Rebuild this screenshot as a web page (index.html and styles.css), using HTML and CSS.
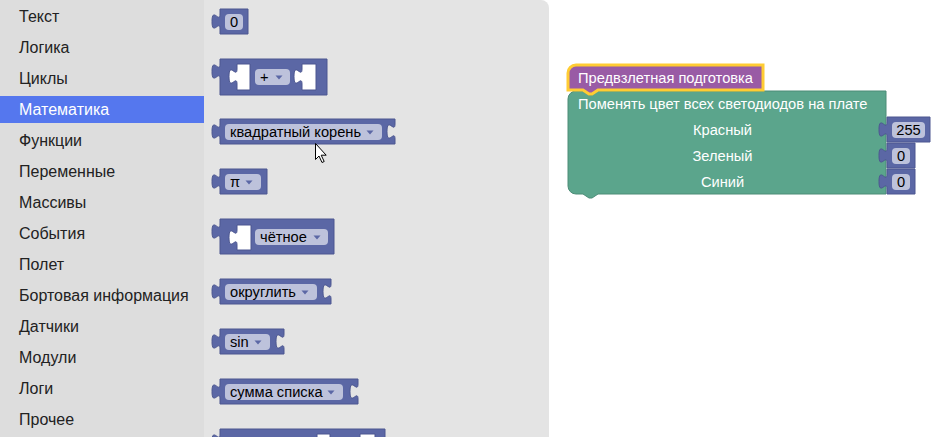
FILE: index.html
```html
<!DOCTYPE html>
<html lang="ru">
<head>
<meta charset="utf-8">
<title>Blockly</title>
<link rel="stylesheet" href="styles.css">
</head>
<body>
<nav class="toolbox">
  <div class="row">Текст</div>
  <div class="row">Логика</div>
  <div class="row">Циклы</div>
  <div class="row selected">Математика</div>
  <div class="row">Функции</div>
  <div class="row">Переменные</div>
  <div class="row">Массивы</div>
  <div class="row">События</div>
  <div class="row">Полет</div>
  <div class="row">Бортовая информация</div>
  <div class="row">Датчики</div>
  <div class="row">Модули</div>
  <div class="row">Логи</div>
  <div class="row">Прочее</div>
</nav>
<main class="workspace">
<svg class="canvas" width="744" height="437" viewBox="204 0 744 437" xmlns="http://www.w3.org/2000/svg">
  <!-- flyout background -->
  <path class="flyout" d="M204,0 H541 A8,8 0 0 1 549,8 V440 H204 Z"/>

  <!-- 1: 0 -->
  <path class="math" d="M220,9 H248 V34 H220 V29 c0,-10 -8,8 -8,-7.5 s8,2.5 8,-7.5 Z"/>
  <rect class="field" x="225" y="14" width="18" height="16" rx="4"/>
  <text class="ftext" x="234" y="27" text-anchor="middle">0</text>

  <!-- 2: + -->
  <path class="math" d="M220,59 H327 V95 H220 V79 c0,-10 -8,8 -8,-7.5 s8,2.5 8,-7.5 Z"/>
  <path class="slot" d="M237,64 H250 V90 H237 V84 c0,-10 -8,8 -8,-7.5 s8,2.5 8,-7.5 Z"/>
  <rect class="field" x="255" y="69" width="35" height="16" rx="4"/>
  <text class="ftext" x="260" y="82">+</text>
  <path class="arrow" d="M275.5,75.5 h7 l-3.5,4 z"/>
  <path class="slot" d="M302,64 H316 V90 H302 V84 c0,-10 -8,8 -8,-7.5 s8,2.5 8,-7.5 Z"/>

  <!-- 3: квадратный корень -->
  <path class="math" d="M220,119 H395 V124 c0,10 -8,-8 -8,7.5 s8,-2.5 8,7.5 V144 H220 V139 c0,-10 -8,8 -8,-7.5 s8,2.5 8,-7.5 Z"/>
  <rect class="field" x="225" y="124" width="157" height="16" rx="4"/>
  <text class="ftext" x="230" y="137">квадратный корень</text>
  <path class="arrow" d="M366.5,130.5 h7 l-3.5,4 z"/>

  <!-- 4: π -->
  <path class="math" d="M220,169 H267 V194 H220 V189 c0,-10 -8,8 -8,-7.5 s8,2.5 8,-7.5 Z"/>
  <rect class="field" x="225" y="174" width="36" height="16" rx="4"/>
  <text class="ftext" x="230" y="187">π</text>
  <path class="arrow" d="M245.5,180.5 h7 l-3.5,4 z"/>

  <!-- 5: чётное -->
  <path class="math" d="M220,219 H334 V254 H220 V239 c0,-10 -8,8 -8,-7.5 s8,2.5 8,-7.5 Z"/>
  <path class="slot" d="M237,225 H251 V250 H237 V245 c0,-10 -8,8 -8,-7.5 s8,2.5 8,-7.5 Z"/>
  <rect class="field" x="255" y="229" width="73" height="16" rx="4"/>
  <text class="ftext" x="260" y="242">чётное</text>
  <path class="arrow" d="M313.5,235.5 h7 l-3.5,4 z"/>

  <!-- 6: округлить -->
  <path class="math" d="M220,279 H331 V284 c0,10 -8,-8 -8,7.5 s8,-2.5 8,7.5 V304 H220 V299 c0,-10 -8,8 -8,-7.5 s8,2.5 8,-7.5 Z"/>
  <rect class="field" x="225" y="284" width="92" height="16" rx="4"/>
  <text class="ftext" x="230" y="297">округлить</text>
  <path class="arrow" d="M301.5,290.5 h7 l-3.5,4 z"/>

  <!-- 7: sin -->
  <path class="math" d="M220,329 H284 V334 c0,10 -8,-8 -8,7.5 s8,-2.5 8,7.5 V354 H220 V349 c0,-10 -8,8 -8,-7.5 s8,2.5 8,-7.5 Z"/>
  <rect class="field" x="225" y="334" width="45" height="16" rx="4"/>
  <text class="ftext" x="230" y="347">sin</text>
  <path class="arrow" d="M254.5,340.5 h7 l-3.5,4 z"/>

  <!-- 8: сумма списка -->
  <path class="math" d="M220,379 H358 V384 c0,10 -8,-8 -8,7.5 s8,-2.5 8,7.5 V404 H220 V399 c0,-10 -8,8 -8,-7.5 s8,2.5 8,-7.5 Z"/>
  <rect class="field" x="225" y="384" width="118" height="16" rx="4"/>
  <text class="ftext" x="230" y="397">сумма списка</text>
  <path class="arrow" d="M327.5,390.5 h7 l-3.5,4 z"/>

  <!-- 9: partially visible -->
  <path class="math" d="M220,429 H385 V470 H220 V449 c0,-10 -8,8 -8,-7.5 s8,2.5 8,-7.5 Z"/>
  <path class="slot" d="M317,434 H330 V460 H317 V454 c0,-10 -8,8 -8,-7.5 s8,2.5 8,-7.5 Z"/>
  <path class="slot" d="M360,434 H375 V460 H360 V454 c0,-10 -8,8 -8,-7.5 s8,2.5 8,-7.5 Z"/>

  <!-- cursor -->
  <path class="cursor" d="M315.5,143.5 v16 l3.5,-3.5 l3,6.5 l2.2,-1 l-3,-6.3 h5 z"/>

  <!-- workspace: green block -->
  <path class="green" d="M568,99 A8,8 0 0 1 576,91 H583 l6,4 h3 l6,-4 H886 V194 H598 l-6,4 h-3 l-6,-4 H576 A8,8 0 0 1 568,186 Z"/>
  <text class="wtext" x="578" y="109">Поменять цвет всех светодиодов на плате</text>
  <text class="wtext" x="722.5" y="135" text-anchor="middle">Красный</text>
  <text class="wtext" x="722.5" y="161" text-anchor="middle">Зеленый</text>
  <text class="wtext" x="722.5" y="186.5" text-anchor="middle">Синий</text>

  <!-- purple hat (selected) -->
  <path class="purple" d="M568,73 A8,8 0 0 1 576,65 H763 V90 H598 l-6,4 h-3 l-6,-4 H568 Z"/>
  <text class="wtext" x="578" y="82.5">Предвзлетная подготовка</text>

  <!-- value blocks -->
  <path class="math" d="M887,117 H930 V142 H887 V137 c0,-10 -8,8 -8,-7.5 s8,2.5 8,-7.5 Z"/>
  <rect class="field" x="892" y="122" width="33" height="16" rx="4"/>
  <text class="ftext" x="908.5" y="135" text-anchor="middle">255</text>

  <path class="math" d="M887,143 H915 V168 H887 V163 c0,-10 -8,8 -8,-7.5 s8,2.5 8,-7.5 Z"/>
  <rect class="field" x="892" y="148" width="18" height="16" rx="4"/>
  <text class="ftext" x="901" y="161" text-anchor="middle">0</text>

  <path class="math" d="M887,169 H915 V194 H887 V189 c0,-10 -8,8 -8,-7.5 s8,2.5 8,-7.5 Z"/>
  <rect class="field" x="892" y="174" width="18" height="16" rx="4"/>
  <text class="ftext" x="901" y="187" text-anchor="middle">0</text>
</svg>
</main>
</body>
</html>
```

FILE: styles.css
```css
html, body {
  margin: 0;
  padding: 0;
  height: 437px;
  overflow: hidden;
  background: #fff;
}

body {
  display: flex;
  font-family: "Liberation Sans", Arial, sans-serif;
}

.toolbox {
  width: 204px;
  flex: 0 0 204px;
  height: 437px;
  box-sizing: border-box;
  background: #dddddd;
  padding-top: 3px;
  display: flex;
  flex-direction: column;
  gap: 4px;
}

.row {
  height: 27px;
  line-height: 27px;
  padding-left: 19px;
  font-size: 16px;
  color: #222;
  white-space: nowrap;
}

.row.selected {
  background: #5577ee;
  color: #fff;
}

.workspace {
  flex: 1;
  position: relative;
  height: 437px;
}

.canvas {
  display: block;
}

.flyout {
  fill: #e4e4e4;
}

.math {
  fill: #5b67a5;
  stroke: #4d5790;
  stroke-width: 1;
}

.slot {
  fill: #ffffff;
  stroke: #4d5790;
  stroke-width: 1;
}

.field {
  fill: #ffffff;
  fill-opacity: 0.6;
}

.arrow {
  fill: #5b67a5;
}

.ftext {
  font-family: "Liberation Sans", Arial, sans-serif;
  font-size: 14.67px;
  fill: #000;
}

.wtext {
  font-family: "Liberation Sans", Arial, sans-serif;
  font-size: 14.67px;
  fill: #fff;
}

.green {
  fill: #5ba58c;
  stroke: #4c8c77;
  stroke-width: 1;
}

.purple {
  fill: #995ba5;
  stroke: #ffcc33;
  stroke-width: 3;
}

.cursor {
  fill: #fff;
  stroke: #000;
  stroke-width: 1;
  stroke-linejoin: round;
}
```
